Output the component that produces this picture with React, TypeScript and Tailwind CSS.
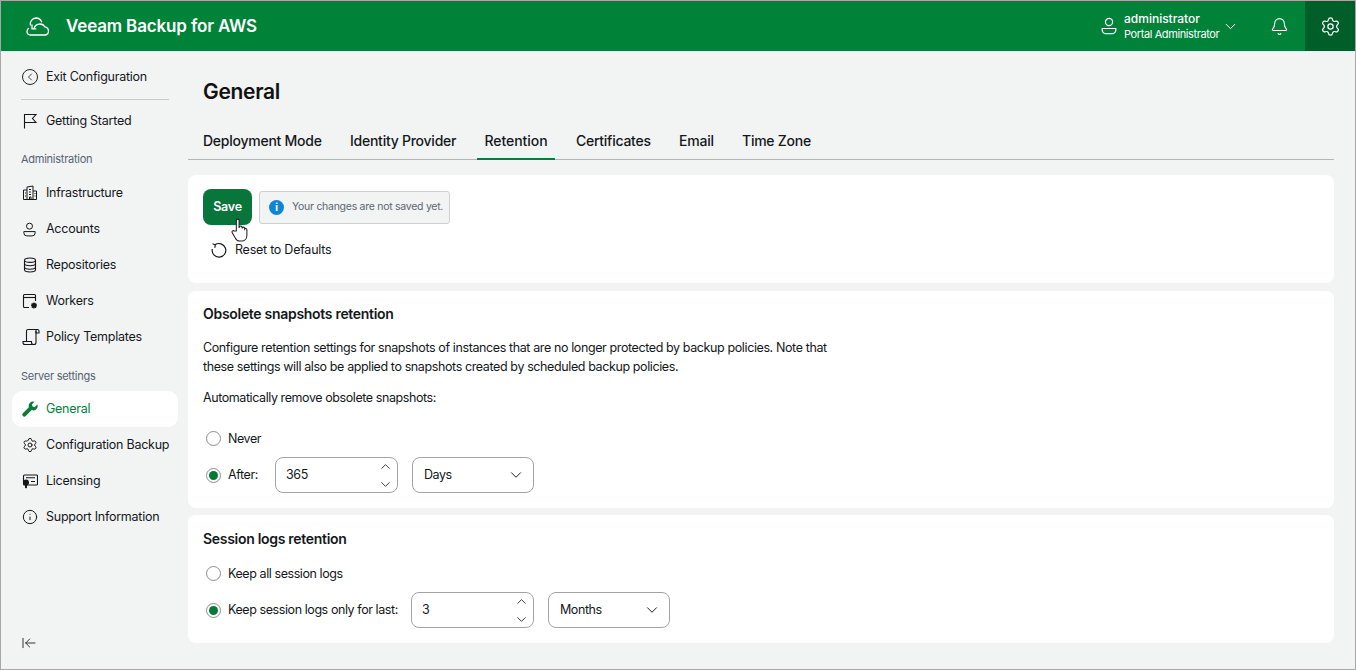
import React from 'react';
import { ChevronDown, ChevronUp, ChevronLeft, Bell, Settings, Info, ArrowLeftToLine } from 'lucide-react';

const font = { fontFamily: 'Inter, "Liberation Sans", sans-serif' };

function UserIcon({ className }: { className?: string }) {
  return (
    <svg viewBox="0 0 18 18" fill="none" stroke="currentColor" strokeWidth="1.2" className={className}>
      <circle cx="9" cy="5" r="3.6" />
      <path d="M2.2 11.5h13.6v1.5a3.7 3.7 0 0 1-3.7 3.7H5.9A3.7 3.7 0 0 1 2.2 13z" />
    </svg>
  );
}

function CloudLogo() {
  return (
    <svg viewBox="0 0 24 19" fill="none" stroke="white" strokeWidth="1.3" className="h-[19px] w-[24px]">
      <path d="M4.5 8.5A6 6 0 0 1 10 1a6.2 6.2 0 0 1 5.8 4.2" />
      <path d="M8 11.5A6 6 0 0 1 19 10a4.1 4.1 0 0 1 .5 8H4.5A3.6 3.6 0 0 1 1 14.5c0-1.5.8-2.7 2-3.3" />
      <path d="M6 7.5v4.3h4.3" />
    </svg>
  );
}

function FlagIcon() {
  return (
    <svg viewBox="0 0 16 16" fill="none" stroke="currentColor" strokeWidth="1.1" className="h-4 w-4">
      <path d="M2.5 15.5V1.5h11.5L10.5 5.5 14 9.5H2.5" />
    </svg>
  );
}

function BuildingIcon() {
  return (
    <svg viewBox="0 0 16 16" fill="none" stroke="currentColor" strokeWidth="1" className="h-4 w-4">
      <path d="M5 14.5V2l6-1v13.5" />
      <path d="M5 5H1.5v9.5h13V6H11" />
      <path d="M7 4.5h2M7 7h2M7 9.5h2M3 8h1M3 11h1M12.5 8.5h1M12.5 11h1M7.5 14.5V12h1.5v2.5" />
    </svg>
  );
}

function DatabaseIcon() {
  return (
    <svg viewBox="0 0 16 16" fill="none" stroke="currentColor" strokeWidth="1.1" className="h-4 w-4">
      <ellipse cx="8" cy="3.2" rx="5.5" ry="2.2" />
      <path d="M2.5 3.2v9.6c0 1.2 2.5 2.2 5.5 2.2s5.5-1 5.5-2.2V3.2" />
      <path d="M2.5 6.6c0 1.2 2.5 2.2 5.5 2.2s5.5-1 5.5-2.2M2.5 10c0 1.2 2.5 2.2 5.5 2.2s5.5-1 5.5-2.2" />
    </svg>
  );
}

function WorkerIcon() {
  return (
    <svg viewBox="0 0 16 16" fill="none" stroke="currentColor" strokeWidth="1.1" className="h-4 w-4">
      <path d="M7 14.5H2.5a1 1 0 0 1-1-1v-11a1 1 0 0 1 1-1h10a1 1 0 0 1 1 1V8" />
      <path d="M1.5 4.5h12" />
      <circle cx="12" cy="12.5" r="2.4" fill="currentColor" strokeDasharray="1 0.5" strokeWidth="1.4" />
    </svg>
  );
}

function PolicyIcon() {
  return (
    <svg viewBox="0 0 18 18" fill="none" stroke="currentColor" strokeWidth="1.1" className="h-[18px] w-[18px]">
      <path d="M4.5 13.5V3a1.5 1.5 0 0 1 1.5-1.5h9.5A1.5 1.5 0 0 1 17 3v2h-3V3" />
      <path d="M14 2v12.5a2 2 0 0 1-2 2H3a2 2 0 0 1-2-2v-1h8.5v1a2 2 0 0 0 2 2" />
    </svg>
  );
}

function LicenseIcon() {
  return (
    <svg viewBox="0 0 16 16" fill="none" stroke="currentColor" strokeWidth="1.1" className="h-4 w-4">
      <rect x="1.5" y="2" width="14" height="10" rx="1" />
      <path d="M4 4.8h9M9 8.5h4" />
      <circle cx="4" cy="9.5" r="3" fill="currentColor" stroke="none" />
      <path d="M3 12v3.5l1-.8 1 .8V12" fill="currentColor" stroke="none" />
    </svg>
  );
}

function WrenchIcon() {
  return (
    <svg viewBox="0 0 16 16" className="h-4 w-4" fill="#0b7a3a">
      <path d="M15.4 3.6l-2.6 2.5-2.3-.5-.5-2.3L12.5.8a4.3 4.3 0 0 0-5.6 5.4L.9 12.2a1.9 1.9 0 0 0 2.8 2.8l6-6a4.3 4.3 0 0 0 5.7-5.4z" />
    </svg>
  );
}

function ResetIcon() {
  return (
    <svg viewBox="0 0 16 16" fill="none" stroke="currentColor" strokeWidth="1.2" className="h-4 w-4">
      <path d="M4 2.8A6.8 6.8 0 1 1 1.3 7" />
      <path d="M1.5 1.8l2.7 1 -.3 3" />
    </svg>
  );
}

function NavItem({ icon, label, active }: { icon: React.ReactNode; label: string; active?: boolean }) {
  return (
    <div className={`flex h-9 items-center whitespace-nowrap rounded-[10px] pl-[10px] ${active ? 'bg-white text-[#00803a]' : 'text-[#14171a]'}`}>
      <span className="flex w-[24px] justify-start">{icon}</span>
      <span>{label}</span>
    </div>
  );
}

function Radio({ checked }: { checked?: boolean }) {
  return (
    <span className="flex h-[15px] w-[15px] items-center justify-center rounded-full border border-[#8d8d8d] bg-white">
      {checked && <span className="h-[9px] w-[9px] rounded-full bg-[#007a35]" />}
    </span>
  );
}

function NumberBox({ value }: { value: string }) {
  return (
    <div className="flex h-9 w-[123px] items-center justify-between rounded-lg border border-[#a3a3a3] bg-white pl-[10px] pr-[4px]">
      <span>{value}</span>
      <span className="flex flex-col gap-[3px] text-[#222]">
        <ChevronUp className="h-[15px] w-[15px]" strokeWidth={1.4} />
        <ChevronDown className="h-[15px] w-[15px]" strokeWidth={1.4} />
      </span>
    </div>
  );
}

function SelectBox({ value }: { value: string }) {
  return (
    <div className="flex h-9 w-[122px] items-center justify-between rounded-lg border border-[#a3a3a3] bg-white pl-[11px] pr-[8px]">
      <span>{value}</span>
      <ChevronDown className="h-[18px] w-[18px]" strokeWidth={1.3} />
    </div>
  );
}

export default function App() {
  const tabs = ['Deployment Mode', 'Identity Provider', 'Retention', 'Certificates', 'Email', 'Time Zone'];

  return (
    <div style={font} className="flex h-[670px] w-[1356px] flex-col overflow-hidden border border-[#a8a8a8] bg-[#f2f4f4] text-[12.5px] tracking-[-0.25px] text-[#14171a]">
      <header className="flex h-[50px] shrink-0 items-center bg-[#008239] text-white">
        <div className="ml-[25px] mr-[16px]"><CloudLogo /></div>
        <div className="pt-[1px] text-[17px] font-semibold tracking-[-0.15px]">Veeam Backup for AWS</div>
        <div className="ml-auto flex items-center">
          <UserIcon className="h-[18px] w-[18px]" />
          <div className="ml-[6px] w-[98px] whitespace-nowrap">
            <div className="text-[12px] font-medium leading-[15px] tracking-normal">administrator</div>
            <div className="text-[11px] leading-[16px] tracking-[-0.4px]">Portal Administrator</div>
          </div>
          <ChevronDown className="h-[17px] w-[17px]" strokeWidth={1.4} />
          <Bell className="ml-[31px] h-[19px] w-[19px]" strokeWidth={1.4} />
          <div className="ml-[16px] flex h-[50px] w-[50px] items-center justify-center bg-[#005f29]">
            <Settings className="h-[21px] w-[21px]" strokeWidth={1.4} />
          </div>
        </div>
      </header>

      <div className="flex min-h-0 flex-1">
        <aside className="flex w-[187px] shrink-0 flex-col pl-[11px] pr-[10px] pt-[8px]">
          <NavItem icon={<span className="flex h-4 w-4 items-center justify-center rounded-full border border-[#222]"><ChevronLeft className="h-3 w-3" strokeWidth={1.6} /></span>} label="Exit Configuration" />
          <div className="mx-[9px] mb-[3px] mt-[4px] h-px bg-[#c9c9c9]" />
          <NavItem icon={<FlagIcon />} label="Getting Started" />
          <div className="ml-[9px] mb-[8px] mt-[12px] h-[16px] text-[11px] leading-[16px] text-[#566270]">Administration</div>
          <NavItem icon={<BuildingIcon />} label="Infrastructure" />
          <NavItem icon={<UserIcon className="h-[15px] w-[15px]" />} label="Accounts" />
          <NavItem icon={<DatabaseIcon />} label="Repositories" />
          <NavItem icon={<WorkerIcon />} label="Workers" />
          <NavItem icon={<PolicyIcon />} label="Policy Templates" />
          <div className="ml-[9px] mb-[7px] mt-[13px] h-[16px] text-[11px] leading-[16px] text-[#566270]">Server settings</div>
          <NavItem icon={<WrenchIcon />} label="General" active />
          <NavItem icon={<Settings className="h-4 w-4" strokeWidth={1.5} />} label="Configuration Backup" />
          <NavItem icon={<LicenseIcon />} label="Licensing" />
          <NavItem icon={<Info className="h-4 w-4" strokeWidth={1.5} />} label="Support Information" />
          <div className="mb-[18px] ml-[9px] mt-auto text-[#333]">
            <ArrowLeftToLine className="h-4 w-4" strokeWidth={1.5} />
          </div>
        </aside>

        <main className="flex w-[1146px] flex-col">
          <h1 className="ml-[15px] mt-[27px] text-[21px] font-semibold leading-[28px] tracking-[-0.3px] text-[#111]">General</h1>
          <div className="mt-[18px] flex h-[36px] border-b border-[#b5b5b5] pl-[8px] text-[14px] font-medium tracking-[-0.25px]">
            {tabs.map((t) => (
              <div key={t} className={`mr-[14.3px] flex h-[36px] items-center border-b-2 px-[7px] pb-[1px] ${t === 'Retention' ? 'border-[#00803a] tracking-[-0.05px]' : 'border-transparent'}`}>{t}</div>
            ))}
          </div>

          <section className="relative mt-[15px] h-[108px] rounded-lg bg-white pl-[15px] pt-[14px]">
            <div className="flex items-center">
              <div className="flex h-9 w-[49px] items-center justify-center rounded-lg bg-[#08763a] font-semibold text-white">Save</div>
              <div className="ml-[7px] flex h-[33px] w-[191px] items-center whitespace-nowrap rounded-[3px] border border-[#cfcfcf] bg-[#f2f4f4] pl-[9px] text-[10.5px] tracking-[-0.27px] text-[#5c6670]">
                <span className="mr-[8px] flex h-[15px] w-[15px] shrink-0 items-center justify-center rounded-full bg-[#0f85d6] text-[10px] font-bold text-white">i</span>
                Your changes are not saved yet.
              </div>
            </div>
            <div className="mt-[16px] flex items-center pl-[8px]">
              <ResetIcon />
              <span className="ml-[8px]">Reset to Defaults</span>
            </div>
            <svg viewBox="0 0 18 24" className="absolute left-[42px] top-[42px] h-[26px] w-[19px]" fill="white" stroke="#222" strokeWidth="1">
              <path d="M6 13V3a1.3 1.3 0 0 1 2.6 0v7l.4-1a1.2 1.2 0 0 1 2.3.4l.2.6a1.2 1.2 0 0 1 2.3.4v.6a1.2 1.2 0 0 1 2.2.7V17c0 3-2 5.5-5 5.5H9c-2 0-3-1-4-3l-3-5c-.6-1.5 1-2.5 2-1.5z" />
            </svg>
          </section>

          <section className="mt-[8px] h-[217px] rounded-lg bg-white pl-[15px] pt-[14px] tracking-[-0.42px]">
            <h2 className="text-[14px] font-semibold leading-[18px] tracking-[-0.3px]">Obsolete snapshots retention</h2>
            <p className="mt-[15px] w-[630px] leading-[19px] tracking-[-0.39px]">Configure retention settings for snapshots of instances that are no longer protected by backup policies. Note that these settings will also be applied to snapshots created by scheduled backup policies.</p>
            <p className="mt-[12px] leading-[19px]">Automatically remove obsolete snapshots:</p>
            <div className="mt-[22px] flex items-center pl-[3px]">
              <Radio />
              <span className="ml-[7px] leading-[19px]">Never</span>
            </div>
            <div className="mt-[9px] flex items-center pl-[3px]">
              <Radio checked />
              <span className="ml-[7px] w-[47px]">After:</span>
              <NumberBox value="365" />
              <span className="w-[14px]" />
              <SelectBox value="Days" />
            </div>
          </section>

          <section className="mt-[7px] h-[128px] rounded-lg bg-white pl-[15px] pt-[15px] tracking-[-0.42px]">
            <h2 className="text-[14px] font-semibold leading-[18px] tracking-[-0.3px]">Session logs retention</h2>
            <div className="mt-[16px] flex items-center pl-[3px]">
              <Radio />
              <span className="ml-[7px] leading-[19px]">Keep all session logs</span>
            </div>
            <div className="mt-[9px] flex items-center pl-[3px]">
              <Radio checked />
              <span className="ml-[7px] w-[183px] whitespace-nowrap">Keep session logs only for last:</span>
              <NumberBox value="3" />
              <span className="w-[14px]" />
              <SelectBox value="Months" />
            </div>
          </section>
        </main>
      </div>
    </div>
  );
}
